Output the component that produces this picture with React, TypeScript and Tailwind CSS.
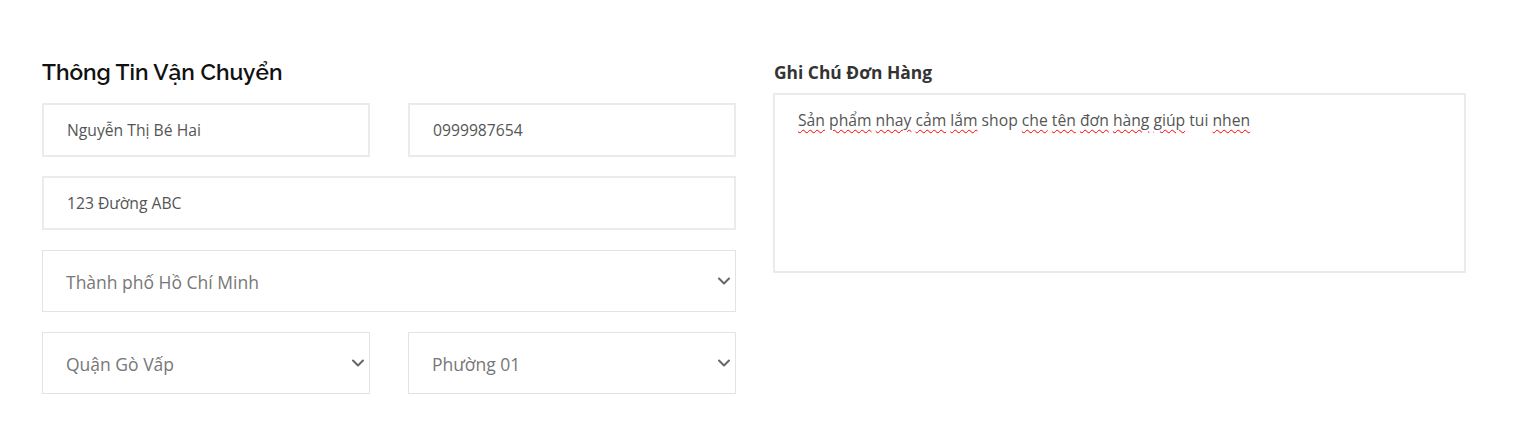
import { ChevronDown } from "lucide-react";

const inputCls =
  "w-full h-[54px] border-2 border-[#ebebeb] bg-white px-[23px] text-[15.7px] text-[#555] outline-none";

const Select = ({ value, className = "" }: { value: string; className?: string }) => (
  <div className={`relative ${className}`}>
    <select
      defaultValue={value}
      className="w-full h-[62px] appearance-none border border-[#e3e3e3] bg-white pl-[23px] pr-10 pt-[2px] text-[17.5px] text-[#777] outline-none"
    >
      <option>{value}</option>
    </select>
    <ChevronDown
      size={20}
      strokeWidth={2.4}
      className="absolute right-[2px] top-1/2 -translate-y-1/2 text-[#666] pointer-events-none"
    />
  </div>
);

const words = [
  { t: "Sản", bad: true },
  { t: "phẩm", bad: true },
  { t: "nhay", bad: true },
  { t: "cảm", bad: true },
  { t: "lắm", bad: true },
  { t: "shop", bad: false },
  { t: "che", bad: true },
  { t: "tên", bad: true },
  { t: "đơn", bad: true },
  { t: "hàng", bad: true },
  { t: "giúp", bad: true },
  { t: "tui", bad: false },
  { t: "nhen", bad: true },
];

export default function App() {
  return (
    <div className="min-h-screen bg-white font-['Open_Sans',sans-serif]">
      <div className="grid grid-cols-[694px_693px] gap-x-[37px] pl-[42px] pt-[57px]">
        {/* Shipping info */}
        <div>
          <h2 className="font-['Raleway','Lato',sans-serif] text-[22.6px] leading-[30px] font-semibold text-[#111] mb-[16px]">
            Thông Tin Vận Chuyển
          </h2>
          <div className="grid grid-cols-2 gap-x-[38px]">
            <input className={inputCls} defaultValue="Nguyễn Thị Bé Hai" />
            <input className={inputCls} defaultValue="0999987654" />
          </div>
          <input className={`${inputCls} mt-[19px]`} defaultValue="123 Đường ABC" />
          <Select value="Thành phố Hồ Chí Minh" className="mt-[20px]" />
          <div className="grid grid-cols-2 gap-x-[38px] mt-[20px]">
            <Select value="Quận Gò Vấp" />
            <Select value="Phường 01" />
          </div>
        </div>

        {/* Order note */}
        <div className="pt-[3px]">
          <label className="block text-[17.4px] leading-[24px] font-bold text-[#333] pl-[1px] mb-[9px]">
            Ghi Chú Đơn Hàng
          </label>
          <div className="h-[180px] border-2 border-[#ebebeb] px-[23px] pt-[13px] text-[15.7px] leading-[24px] text-[#555]">
            {words.map((w, i) => (
              <span key={i}>
                <span
                  className={
                    w.bad
                      ? "underline decoration-wavy decoration-[#f00] decoration-1 underline-offset-[3px]"
                      : ""
                  }
                >
                  {w.t}
                </span>
                {i < words.length - 1 ? " " : ""}
              </span>
            ))}
          </div>
        </div>
      </div>
    </div>
  );
}
